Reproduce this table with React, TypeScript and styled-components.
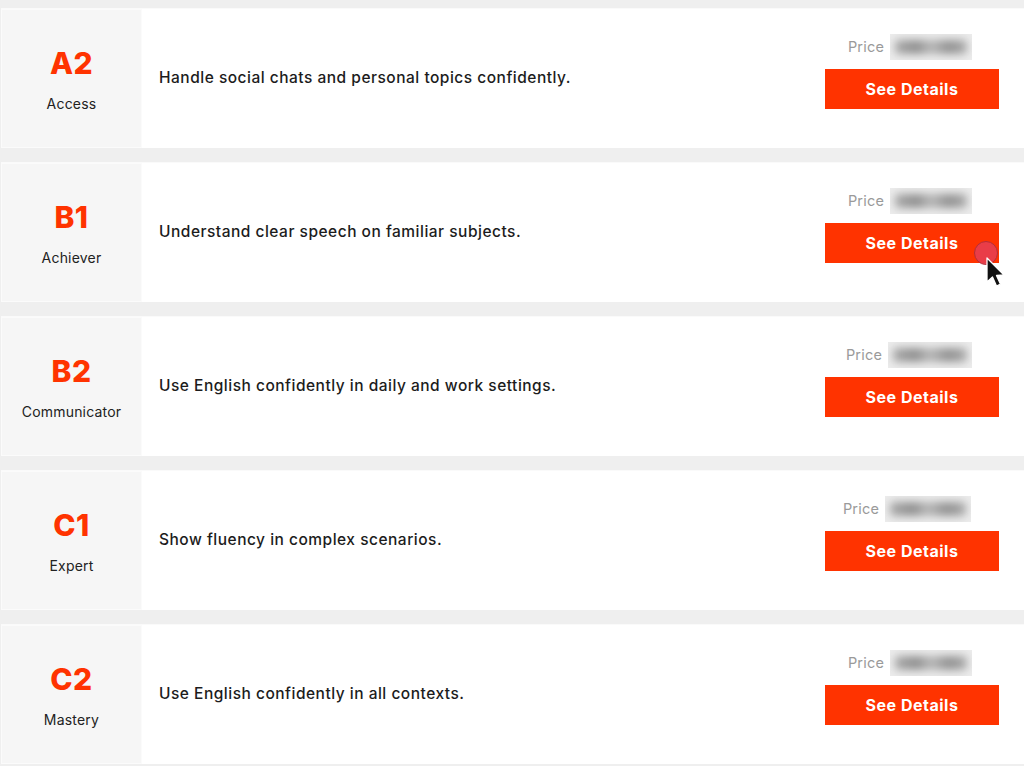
import React from "react";
import styled, { createGlobalStyle } from "styled-components";

const GlobalStyle = createGlobalStyle`
  html, body { margin: 0; padding: 0; background: #efefef; }
  body { font-family: Inter, "Open Sans", Arial, sans-serif; }
  * { box-sizing: border-box; }
`;

const List = styled.div`
  display: flex;
  flex-direction: column;
  gap: 14px;
  padding: 8px 0 2px 1px;
  width: 100%;
`;

const Card = styled.div`
  display: grid;
  grid-template-columns: 141px 1fr auto;
  height: 140px;
  background: #ffffff;
  border-top: 1px solid #fafafa;
`;

const LevelCell = styled.div`
  display: flex;
  flex-direction: column;
  align-items: center;
  justify-content: center;
  background: #f6f6f6;
  border: 1px solid #fbfbfb;
`;

const LevelCode = styled.div`
  font-family: Inter, sans-serif;
  font-weight: 800;
  font-size: 30px;
  line-height: 36px;
  color: #ff3300;
  letter-spacing: 0.5px;
`;

const LevelName = styled.div`
  margin-top: 14px;
  font-size: 14px;
  line-height: 18px;
  color: #222;
  letter-spacing: 0.2px;
`;

const Description = styled.div`
  display: flex;
  align-items: center;
  padding-left: 17px;
  padding-bottom: 2px;
  font-size: 15.5px;
  color: #1c1c1c;
  font-weight: 500;
  letter-spacing: 0.5px;
`;

const Side = styled.div`
  display: flex;
  flex-direction: column;
  align-items: center;
  justify-content: center;
  padding: 0 25px 14px 0;
  gap: 10px;
`;

const PriceRow = styled.div<{ $shift: number }>`
  display: flex;
  align-items: center;
  gap: 6px;
  height: 24px;
  margin-left: ${(p) => p.$shift}px;
`;

const PriceLabel = styled.span`
  font-size: 14.5px;
  color: #9a9a9a;
  letter-spacing: 0.2px;
`;

const PriceBlur = styled.div<{ $w: number }>`
  width: ${(p) => p.$w}px;
  height: 26px;
  background: #ececec;
  position: relative;
  overflow: hidden;
  &::after {
    content: "";
    position: absolute;
    left: 5px;
    right: 5px;
    top: 6px;
    bottom: 6px;
    background: linear-gradient(90deg, #aaaaaa 0%, #8e8e8e 30%, #b8b8b8 50%, #909090 75%, #acacac 100%);
    filter: blur(4px);
    border-radius: 4px;
  }
`;

const ButtonWrap = styled.div`
  position: relative;
`;

const DetailsButton = styled.button`
  width: 174px;
  height: 40px;
  border: none;
  background: #ff3300;
  color: #ffffff;
  font-family: Inter, sans-serif;
  font-weight: 700;
  font-size: 16px;
  letter-spacing: 0.5px;
  cursor: pointer;
  padding: 0;
`;

const Cursor = styled.div`
  position: absolute;
  left: 149px;
  top: 18px;
  width: 40px;
  height: 50px;
  pointer-events: none;
`;

type Level = {
  code: string;
  name: string;
  desc: string;
  priceW: number;
  shift: number;
  cursor?: boolean;
};

const levels: Level[] = [
  { code: "A2", name: "Access", desc: "Handle social chats and personal topics confidently.", priceW: 82, shift: -4 },
  { code: "B1", name: "Achiever", desc: "Understand clear speech on familiar subjects.", priceW: 82, shift: -4, cursor: true },
  { code: "B2", name: "Communicator", desc: "Use English confidently in daily and work settings.", priceW: 84, shift: -6 },
  { code: "C1", name: "Expert", desc: "Show fluency in complex scenarios.", priceW: 86, shift: -10 },
  { code: "C2", name: "Mastery", desc: "Use English confidently in all contexts.", priceW: 82, shift: -4 },
];

export default function App() {
  return (
    <>
      <GlobalStyle />
      <List>
        {levels.map((l) => (
          <Card key={l.code}>
            <LevelCell>
              <LevelCode>{l.code}</LevelCode>
              <LevelName>{l.name}</LevelName>
            </LevelCell>
            <Description>{l.desc}</Description>
            <Side>
              <PriceRow $shift={l.shift}>
                <PriceLabel>Price</PriceLabel>
                <PriceBlur $w={l.priceW} />
              </PriceRow>
              <ButtonWrap>
                <DetailsButton>See Details</DetailsButton>
                {l.cursor && (
                  <Cursor>
                    <svg width="40" height="50" viewBox="0 0 40 50">
                      <circle cx="12" cy="12" r="11.5" fill="#e83e4c" stroke="#b02e3a" strokeWidth="1" opacity="0.95" />
                      <path
                        d="M13 17 L13 41 L18.5 36 L22.5 45 L26.5 43.2 L22.5 34.5 L30 34 Z"
                        fill="#111"
                        stroke="#fff"
                        strokeWidth="1.3"
                        strokeLinejoin="round"
                      />
                    </svg>
                  </Cursor>
                )}
              </ButtonWrap>
            </Side>
          </Card>
        ))}
      </List>
    </>
  );
}
